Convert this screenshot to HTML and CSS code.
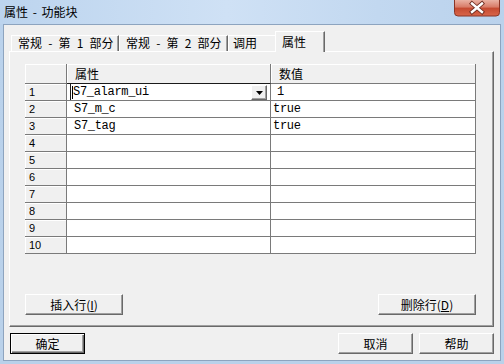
FILE: index.html
```html
<!DOCTYPE html>
<html lang="zh-CN">
<head>
<meta charset="utf-8">
<title>属性 - 功能块</title>
<link rel="stylesheet" href="styles.css">
</head>
<body>
<div class="window">
  <div class="titlebar">
    <span class="title">属性 - 功能块</span>
    <div class="close">
      <svg width="46" height="17" viewBox="0 0 46 17">
        <defs>
          <linearGradient id="cg" x1="0" y1="0" x2="0" y2="1">
            <stop offset="0" stop-color="#eab2a4"/>
            <stop offset="0.45" stop-color="#d87a66"/>
            <stop offset="0.5" stop-color="#c44a31"/>
            <stop offset="1" stop-color="#d9664a"/>
          </linearGradient>
        </defs>
        <path d="M0.5 0 V12.5 A3.5 3.5 0 0 0 4 16 H42 A3.5 3.5 0 0 0 45.5 12.5 V0" fill="url(#cg)" stroke="#8a3526"/>
        <path d="M18 3.5 L28 12 M28 3.5 L18 12" stroke="#6b2a1e" stroke-width="4.2" stroke-linecap="square"/>
        <path d="M18 3.5 L28 12 M28 3.5 L18 12" stroke="#ffffff" stroke-width="2.4" stroke-linecap="square"/>
      </svg>
    </div>
  </div>
  <div class="client">
    <div class="tabs">
      <div class="tab t1">常规 - 第 1 部分</div>
      <div class="tab t2">常规 - 第 2 部分</div>
      <div class="tab t3">调用</div>
      <div class="tab active">属性</div>
    </div>
    <div class="panel">
      <div class="grid">
        <div class="hd"></div>
        <div class="hd">属性</div>
        <div class="hd">数值</div>

        <div class="rh">1</div>
        <div class="cell c1 edit">
          <div class="combo">
            <span class="caret"></span>
            <span class="mono">S7_alarm_ui</span>
            <span class="drop"><svg width="7" height="4" viewBox="0 0 7 4"><path d="M0 0H7L3.5 4Z" fill="#000"/></svg></span>
          </div>
        </div>
        <div class="cell c2 mono first">1</div>

        <div class="rh">2</div>
        <div class="cell c1 mono">S7_m_c</div>
        <div class="cell c2 mono">true</div>

        <div class="rh">3</div>
        <div class="cell c1 mono">S7_tag</div>
        <div class="cell c2 mono">true</div>

        <div class="rh">4</div><div class="cell"></div><div class="cell"></div>
        <div class="rh">5</div><div class="cell"></div><div class="cell"></div>
        <div class="rh">6</div><div class="cell"></div><div class="cell"></div>
        <div class="rh">7</div><div class="cell"></div><div class="cell"></div>
        <div class="rh">8</div><div class="cell"></div><div class="cell"></div>
        <div class="rh">9</div><div class="cell"></div><div class="cell"></div>
        <div class="rh">10</div><div class="cell"></div><div class="cell"></div>
      </div>
      <div class="panel-buttons">
        <button class="btn wide">插入行(<u>I</u>)</button>
        <button class="btn wide">删除行(<u>D</u>)</button>
      </div>
    </div>
    <div class="footer">
      <button class="btn default">确定</button>
      <div class="spacer"></div>
      <button class="btn">取消</button>
      <button class="btn">帮助</button>
    </div>
  </div>
</div>
</body>
</html>
```

FILE: styles.css
```css
* {
  box-sizing: border-box;
  margin: 0;
  padding: 0;
}

html, body {
  width: 504px;
  height: 364px;
  overflow: hidden;
}

body {
  font-family: "Noto Sans CJK SC", "Liberation Sans", sans-serif;
  font-size: 12px;
  color: #000;
  background: #b9d1ea;
}

.window {
  width: 504px;
  height: 364px;
  display: flex;
  flex-direction: column;
  background: linear-gradient(to bottom, #c8dcf2 0px, #bad2ec 24px, #b9d1ea 100%);
}

.titlebar {
  height: 24px;
  flex: none;
  display: flex;
  justify-content: space-between;
  align-items: flex-start;
  padding: 0 4px 0 4px;
  background: linear-gradient(to right, #bcd4ee 0%, #cfe1f5 45%, #c2d8f0 75%, #bad2ec 100%);
}

.title {
  line-height: 23px;
  font-size: 12px;
  word-spacing: 2px;
  color: #000;
}

.close {
  width: 46px;
  height: 17px;
  display: flex;
}

.client {
  flex: 1;
  margin: 0 3px 3px 3px;
  border: 1px solid #8da4bf;
  background: #f0f0f0;
  display: flex;
  flex-direction: column;
  padding: 0 6px 0 5px;
}

/* Tabs */
.tabs {
  height: 26px;
  flex: none;
  display: flex;
  align-items: flex-end;
  padding-left: 2px;
}

.tab {
  height: 16px;
  border-top: 1px solid #ffffff;
  border-left: 1px solid #ffffff;
  border-right: 1px solid #696969;
  box-shadow: inset -1px 0 #a0a0a0;
  line-height: 14px;
  white-space: pre;
  word-spacing: 3.5px;
  padding-left: 6px;
  background: #f0f0f0;
}

.t1 { width: 108px; }
.t2 { width: 109px; }
.t3 { width: 49px; padding-left: 4px; }

.tab.active {
  position: relative;
  z-index: 1;
  width: 50px;
  height: 21px;
  margin-left: -2px;
  margin-bottom: -1px;
  padding-top: 2px;
  line-height: 15px;
}

/* Panel */
.panel {
  height: 276px;
  flex: none;
  border: 1px solid;
  border-color: #ffffff #696969 #696969 #ffffff;
  box-shadow: inset -1px -1px #a0a0a0;
  display: flex;
  flex-direction: column;
  padding: 12px 17px 11px 15px;
}

.grid {
  display: grid;
  grid-template-columns: 42px 204px 205px;
  grid-template-rows: 20px repeat(10, 17px);
  width: 451px;
}

.grid > div {
  border-right: 1px solid #7a7a7a;
  border-bottom: 1px solid #7a7a7a;
  display: flex;
  align-items: center;
  overflow: hidden;
}

.hd {
  background: #f0f0f0;
  box-shadow: inset 1px 1px #ffffff;
  padding-left: 8px;
}

.rh {
  background: #f0f0f0;
  box-shadow: inset 1px 1px #ffffff;
  padding-left: 4px;
  font-family: "Liberation Sans", Arial, sans-serif;
  font-size: 11px;
}

.cell {
  background: #ffffff;
}

.c1 { padding-left: 7px; }
.c2 { padding-left: 2px; }
.c2.first { padding-left: 6px; }

.mono {
  font-family: "Liberation Mono", "DejaVu Sans Mono", monospace;
  font-size: 12px;
  letter-spacing: -0.3px;
}

.grid > .edit {
  padding-left: 3px;
  align-items: stretch;
  border-top: 1px solid #1a1a1a;
  margin-top: -1px;
}

.combo {
  flex: 1;
  display: flex;
  align-items: center;
  border-left: 1px solid #1a1a1a;
  padding-right: 3px;
}

.caret {
  width: 1px;
  height: 13px;
  background: #000;
  margin-left: 1px;
}

.drop {
  margin-left: auto;
  width: 16px;
  height: 15px;
  align-self: flex-start;
  margin-top: 1px;
  background: #f0f0f0;
  border: 1px solid;
  border-color: #ffffff #696969 #696969 #ffffff;
  box-shadow: inset -1px -1px #a0a0a0;
  display: flex;
  align-items: center;
  justify-content: center;
}

.panel-buttons {
  margin-top: auto;
  display: flex;
  justify-content: space-between;
}

/* Buttons */
.btn {
  font-family: "Noto Sans CJK SC", "Liberation Sans", sans-serif;
  font-size: 12px;
  color: #000;
  height: 21px;
  width: 75px;
  background: #f0f0f0;
  border: 1px solid;
  border-color: #ffffff #696969 #696969 #ffffff;
  box-shadow: inset -1px -1px #a0a0a0;
  display: flex;
  align-items: center;
  justify-content: center;
  line-height: 1;
}

.btn u {
  text-decoration: underline;
}

.btn.wide {
  width: 98px;
}

.btn.default {
  border: 1px solid #000000;
  box-shadow: inset 1px 1px #ffffff, inset -1px -1px #696969, inset -2px -2px #a0a0a0;
}

.footer {
  height: 33px;
  flex: none;
  display: flex;
  align-items: center;
  gap: 6px;
  padding-left: 1px;
}

.spacer {
  flex: 1;
}
```
